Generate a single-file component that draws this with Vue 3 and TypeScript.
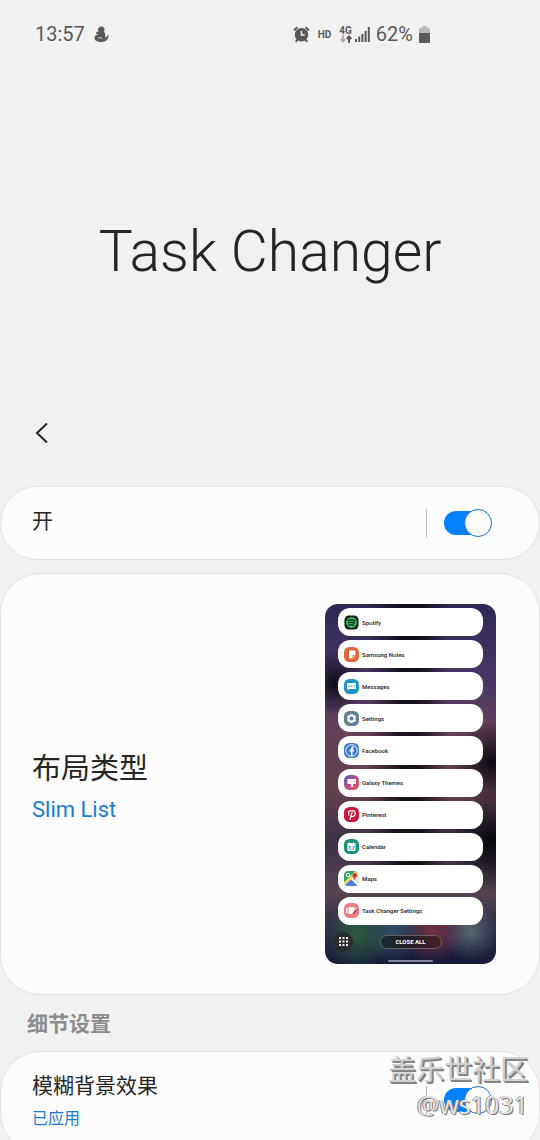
<script setup lang="ts">
import { ref } from 'vue'

interface AppEntry {
  id: string
  name: string
}

const enabled = ref(true)
const blurEnabled = ref(true)

const apps: AppEntry[] = [
  { id: 'spotify', name: 'Spotify' },
  { id: 'notes', name: 'Samsung Notes' },
  { id: 'messages', name: 'Messages' },
  { id: 'settings', name: 'Settings' },
  { id: 'facebook', name: 'Facebook' },
  { id: 'themes', name: 'Galaxy Themes' },
  { id: 'pinterest', name: 'Pinterest' },
  { id: 'calendar', name: 'Calendar' },
  { id: 'maps', name: 'Maps' },
  { id: 'task', name: 'Task Changer Settings' },
]
</script>

<template>
  <div class="screen">
    <div class="status">
      <div class="status-group">
        <span>13:57</span>
        <svg class="figure" viewBox="0 0 16 18" aria-hidden="true">
          <path d="M8 .5a3.200 3.200 0 0 1 2.500 5.300c1.600 2 2 4 1.200 6.200 1.200 0 1.900-.6 2.300-1.800l1.800-.3c-.6 4.500-3.300 7.100-7.800 7.100-4.200 0-7.500-1.300-7.500-4.300 0-2 1.500-3.300 4.500-3.900L2.300 8.200c-.6-1.300.5-2.100 2.700-2.500A3.200 3.200 0 0 1 8 .5z" />
          <path d="M4.500 13c1.500-1.200 3.500-.8 4 .6" class="cut" />
        </svg>
      </div>
      <div class="status-group right">
        <svg class="alarm" viewBox="0 0 17 17" aria-hidden="true">
          <circle cx="8.500" cy="8.800" r="6.800" />
          <path d="M1 4.500 4.300 1.300M16 4.500 12.700 1.300M4.500 13.500 2.800 15.800M12.500 13.500l1.700 2.300" class="line" />
          <path d="M8.500 5v4h3.200" class="hand" />
        </svg>
        <span class="hd">HD</span>
        <span class="net">
          <span>4G</span>
          <svg viewBox="0 0 12 8" aria-hidden="true">
            <path d="M3 0v6M.8 4 3 6.500 5.200 4" class="down" />
            <path d="M9 8V2M6.600 4 9 1.500 11.400 4" class="up" />
          </svg>
        </span>
        <svg class="signal" viewBox="0 0 15 15" aria-hidden="true">
          <path d="M1 15v-3M4.200 15v-5.500M7.400 15V7M10.600 15V4M13.800 15V0" />
        </svg>
        <span>62%</span>
        <svg class="battery" viewBox="0 0 11 17" aria-hidden="true">
          <path d="M3 0h5v2h2q1 0 1 1v5H0V3q0-1 1-1h2z" fill="#b9b9b9" />
          <path d="M0 7h11v9q0 1-1 1H1q-1 0-1-1z" fill="#5a5a5a" />
        </svg>
      </div>
    </div>

    <header>
      <h1>Task Changer</h1>
      <button class="back" type="button" aria-label="返回">
        <svg viewBox="0 0 14 22" aria-hidden="true"><path d="M12 1.500 2 11l10 9.500" /></svg>
      </button>
    </header>

    <main>
      <section class="card master">
        <label for="master">开</label>
        <span class="divider"></span>
        <input id="master" v-model="enabled" class="toggle" type="checkbox" />
      </section>

      <section class="card layout">
        <div class="layout-text">
          <h2>布局类型</h2>
          <a href="#layout">Slim List</a>
        </div>
        <div class="preview">
          <ul>
            <li v-for="app in apps" :key="app.id">
              <svg viewBox="0 0 30 30" aria-hidden="true">
                <g v-if="app.id === 'spotify'">
                  <rect x="1" y="1" width="28" height="28" rx="9" fill="#07130b" />
                  <circle cx="15" cy="15" r="11" fill="#2ebd59" />
                  <path d="M8 11q8-2.500 14 1M9 15.500q7-2 12 1M10 20q6-1.500 9 .5" class="s" stroke="#07130b" />
                </g>
                <g v-else-if="app.id === 'notes'">
                  <rect width="30" height="30" rx="11" fill="#dc683c" />
                  <path d="M8 7h15v9h-6v7h-7V7z" fill="#fff" />
                  <path d="M18 23v-6h5z" fill="#ffc9ad" />
                </g>
                <g v-else-if="app.id === 'messages'">
                  <rect width="30" height="30" rx="11" fill="#1c95c9" />
                  <path d="M8 8h14q2 0 2 2v8q0 2-2 2H11l-3 3v-3q-2 0-2-2v-8q0-2 2-2z" fill="#fff" />
                  <path d="M9.500 14h1m4 0h1m4 0h1" class="s" stroke="#1c95c9" />
                </g>
                <g v-else-if="app.id === 'settings'">
                  <rect width="30" height="30" rx="11" fill="#637f95" />
                  <path d="M15 6v18M7 10.500l16 9M7 19.500l16-9" stroke="#fff" stroke-width="5" />
                  <circle cx="15" cy="15" r="8" fill="#fff" />
                  <circle cx="15" cy="15" r="4" fill="#637f95" />
                </g>
                <g v-else-if="app.id === 'facebook'">
                  <rect width="30" height="30" rx="11" fill="#3979cc" />
                  <circle cx="15" cy="15" r="11.500" fill="#3979cc" stroke="#fff" stroke-width="2" />
                  <path d="M14 26V17h-3v-4h3v-2q0-5 6-4v3q-3-.5-3 2v1h3l-.5 4H17v9z" fill="#fff" />
                </g>
                <g v-else-if="app.id === 'themes'">
                  <defs>
                    <linearGradient id="theme-fill" x1="0" y1="0" x2="1" y2="1">
                      <stop offset="0" stop-color="#3669cf" />
                      <stop offset=".45" stop-color="#b34f91" />
                      <stop offset="1" stop-color="#f35b50" />
                    </linearGradient>
                  </defs>
                  <rect width="30" height="30" rx="11" fill="url(#theme-fill)" />
                  <path d="M7 8h17v8q0 2-2 2h-4v5q-2 3-4 0v-5H9q-2 0-2-2z" fill="#fff" />
                  <path d="M8 12h15" stroke="#d8a2c3" stroke-width="1" />
                </g>
                <g v-else-if="app.id === 'pinterest'">
                  <rect width="30" height="30" rx="11" fill="#c9163a" />
                  <path d="M10 16q-4-9 6-9c10 0 7 12 1 12q-3 0-3-2m2-6-4 14" class="s" stroke="#fff" />
                </g>
                <g v-else-if="app.id === 'calendar'">
                  <rect width="30" height="30" rx="11" fill="#149378" />
                  <path d="M7 8h3V6h2v2h6V6h2v2h3v16H7z" fill="#fff" />
                  <text x="15" y="21" text-anchor="middle" font-size="12" font-weight="700" fill="#149378">17</text>
                </g>
                <g v-else-if="app.id === 'maps'">
                  <rect width="30" height="30" rx="9" fill="#e8e5dc" />
                  <path d="M9 0h14L0 23V9q0-9 9-9z" fill="#35a35a" />
                  <path d="m15 16 13 12q-2 2-7 2H7q-4 0-6-4z" fill="#4b80df" />
                  <path d="m2 26 24-24" stroke="#f8ce4d" stroke-width="4" />
                  <path d="m15 15 13 13" stroke="#fff" stroke-width="3" />
                  <circle cx="8" cy="8" r="3.500" fill="none" stroke="#fff" stroke-width="2" />
                  <path d="M21 19q-1-5-4-8a5 5 0 1 1 9 0q-4 3-5 8z" fill="#d84635" />
                  <circle cx="21.500" cy="8" r="1.800" fill="#842b22" />
                </g>
                <g v-else>
                  <rect width="30" height="30" rx="11" fill="#ed7d81" />
                  <path d="M4 10h3v10H4zM9 8h12v8l-5 6H9zM23 10h3v6h-3z" fill="#fff" />
                  <path d="m17 23 2-5 7-7 1 3-6 7z" fill="#a83e67" />
                </g>
              </svg>
              <span>{{ app.name }}</span>
            </li>
          </ul>
          <div class="dock">
            <button class="grid-button" type="button" aria-label="Apps">
              <svg viewBox="0 0 9 9" aria-hidden="true">
                <path d="M0 1h2m1.500 0h2M7 1h2M0 4.500h2m1.500 0h2m1.500 0h2M0 8h2m1.500 0h2M7 8h2" />
              </svg>
            </button>
            <button class="close" type="button">CLOSE ALL</button>
          </div>
          <span class="home"></span>
        </div>
      </section>

      <h3>细节设置</h3>

      <section class="card detail">
        <label for="blur">
          <span>模糊背景效果</span>
          <small>已应用</small>
        </label>
        <span class="divider"></span>
        <input id="blur" v-model="blurEnabled" class="toggle" type="checkbox" />
      </section>
    </main>

    <div class="watermark">
      <span>盖乐世社区</span>
      <span class="user">@ws1031</span>
    </div>
  </div>
</template>

<style>
body {
  background: #f1f1f1;
}
</style>

<style scoped>
*,
*::before,
*::after {
  box-sizing: border-box;
}

.screen {
  position: relative;
  height: 100vh;
  overflow: hidden;
  background: #f1f1f1;
  color: #252525;
  font-family: Roboto, "Noto Sans CJK SC", sans-serif;
}

.status {
  display: flex;
  justify-content: space-between;
  height: 68px;
  padding: 0 110px 0 35px;
  color: #5a5a5a;
  font-size: 20px;
}

.status-group {
  display: flex;
  align-items: center;
  gap: 9px;
}

.status-group.right {
  gap: 6px;
}

.status svg {
  flex: none;
  fill: #5a5a5a;
}

.figure {
  width: 15px;
  height: 17px;
}

.figure .cut {
  fill: none;
  stroke: #f1f1f1;
  stroke-width: 1;
}

.alarm {
  width: 17px;
  height: 17px;
}

.alarm .line {
  stroke: #5a5a5a;
  stroke-width: 2;
}

.alarm .hand {
  fill: none;
  stroke: #f1f1f1;
  stroke-width: 1.6;
}

.hd {
  margin: 0 2px;
  font-size: 10px;
  font-weight: 700;
}

.net {
  display: flex;
  flex-direction: column;
  align-items: center;
  font-size: 10px;
  font-weight: 700;
  line-height: 9px;
}

.net svg {
  width: 12px;
  height: 8px;
}

.net path {
  fill: none;
  stroke: #5a5a5a;
  stroke-width: 2;
}

.net .down {
  stroke: #b0b0b0;
}

.signal {
  width: 15px;
  height: 15px;
  margin-left: -3px;
}

.signal path {
  stroke: #5a5a5a;
  stroke-width: 2;
}

.battery {
  width: 11px;
  height: 17px;
}

header {
  display: flex;
  flex-direction: column;
  height: 418px;
}

h1 {
  margin: 149px 0 0;
  font-size: 57px;
  font-weight: 300;
  line-height: 70px;
  text-align: center;
}

button {
  padding: 0;
  border: 0;
  background: none;
  font-family: inherit;
}

.back {
  display: grid;
  place-items: center;
  width: 48px;
  height: 48px;
  margin: 122px 0 0 18px;
}

.back svg {
  width: 14px;
  height: 22px;
  fill: none;
  stroke: #252525;
  stroke-width: 2;
}

.card {
  display: flex;
  align-items: center;
  border: 1px solid #e2e2e2;
  border-radius: 40px;
  background: #fcfcfc;
}

.card label {
  flex: 1;
  font-size: 21px;
}

.master {
  height: 74px;
  margin-bottom: 13px;
  padding: 0 47px 0 31px;
  border-radius: 37px;
}

.master label {
  line-height: 30px;
  padding-bottom: 4px;
}

.divider {
  width: 1px;
  height: 28px;
  margin-right: 17px;
  background: #b8b8b8;
}

.toggle {
  display: flex;
  align-items: center;
  appearance: none;
  width: 48px;
  height: 28px;
  margin: 0;
  border-radius: 14px;
}

.toggle::before {
  content: "";
  flex: none;
  width: 44px;
  height: 24px;
  border-radius: 12px;
  background: #a0a0a0;
}

.toggle::after {
  content: "";
  flex: none;
  width: 28px;
  height: 28px;
  margin-left: -44px;
  border: 1px solid #8a8a8a;
  border-radius: 50%;
  background: #fcfcfc;
}

.toggle:checked::before {
  background: #0381fe;
}

.toggle:checked::after {
  margin-left: -24px;
  border-color: #1a72cc;
}

.layout {
  justify-content: space-between;
  padding: 30px 43px 30px 31px;
}

.layout-text {
  padding-top: 6px;
}

h2 {
  margin: 0;
  font-size: 29px;
  font-weight: 400;
  line-height: 42px;
}

.layout a {
  display: block;
  padding-top: 4px;
  color: #1b7ccf;
  font-size: 22px;
  line-height: 32px;
  text-decoration: none;
}

.preview {
  display: flex;
  flex-direction: column;
  width: 171px;
  height: 360px;
  padding: 4px 13px 2px;
  border-radius: 13px;
  background:
    radial-gradient(circle at 19% 92%, #2c6a3ecc 0, transparent 10%),
    radial-gradient(circle at 40% 91%, #33647daa 0, transparent 9%),
    radial-gradient(circle at 63% 91%, #8f3340bb 0, transparent 9%),
    radial-gradient(circle at 85% 91%, #6e8784aa 0, transparent 8%),
    radial-gradient(circle at 98% 66%, #08070c 0, transparent 18%),
    radial-gradient(circle at 98% 44%, #0b0911 0, transparent 16%),
    radial-gradient(circle at 6% 22%, #100c19 0, transparent 10%),
    linear-gradient(90deg, transparent 25%, #08070ccc 45%, #08070ccc 55%, transparent 72%) no-repeat 0 0 / 100% 80%,
    linear-gradient(#2f2755, #493766 22%, #654058 35%, #62404e 52%, #3c314a 66%, #574451 80%, #292646 91%, #171a3a 100%);
}

ul {
  display: grid;
  grid-template-rows: repeat(10, 1fr);
  gap: 4px;
  height: 317px;
  margin: 0;
  padding: 0;
  list-style: none;
}

li {
  display: flex;
  align-items: center;
  gap: 3px;
  padding-left: 6px;
  border-radius: 12px;
  background: #fff;
  color: #222;
  font-size: 6px;
  font-weight: 500;
}

li svg {
  width: 15px;
  height: 15px;
}

.s {
  fill: none;
  stroke-width: 2.5;
  stroke-linecap: round;
}

.dock {
  display: grid;
  grid-template-columns: 1fr 62px 1fr;
  align-items: center;
  height: 33px;
  margin: 0 -5px;
}

.grid-button {
  display: grid;
  place-items: center;
  width: 20px;
  height: 20px;
  border-radius: 50%;
  background: #292b2d;
}

.grid-button svg {
  width: 9px;
  height: 9px;
  stroke: #fff;
  stroke-width: 2;
}

.close {
  height: 14px;
  border: 1px solid #6a6062;
  border-radius: 7px;
  background: linear-gradient(90deg, #182b33, #251d28 50%, #4a2028);
  color: #fff;
  font-size: 6px;
  font-weight: 700;
  line-height: 12px;
}

.home {
  align-self: center;
  width: 45px;
  height: 2px;
  margin-top: 2px;
  border-radius: 1px;
  background: #85859a;
}

h3 {
  margin: 0;
  padding: 14px 27px 12px;
  color: #8c8c8c;
  font-size: 21px;
  font-weight: 700;
  line-height: 30px;
}

.detail {
  padding: 16px 47px 20px 31px;
}

.detail label {
  padding-top: 2px;
}

.detail label span,
.detail label small {
  display: block;
}

.detail label span {
  line-height: 32px;
}

.detail label small {
  padding-top: 4px;
  color: #1b7ccf;
  font-size: 16px;
  line-height: 26px;
}

.watermark {
  position: absolute;
  right: 12px;
  bottom: 18px;
  display: flex;
  flex-direction: column;
  align-items: flex-end;
  color: #d2d2d2;
  font-family: "Noto Sans CJK SC", sans-serif;
  font-size: 28px;
  line-height: 36px;
  text-shadow: 1px 1px 0 #888, 2px 2px 0 #808080;
  pointer-events: none;
}

.watermark .user {
  color: #e4e4e4;
  font-family: "Noto Sans", sans-serif;
  font-size: 25px;
  text-shadow: 1px 1px 0 #777, -1px 0 0 #8a8a8a;
}
</style>
